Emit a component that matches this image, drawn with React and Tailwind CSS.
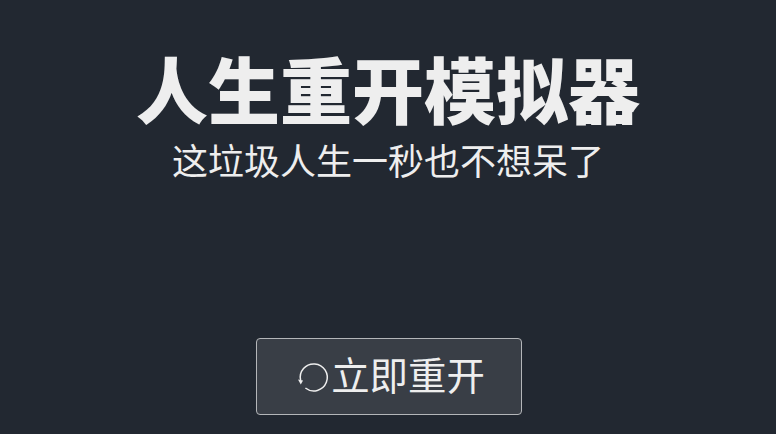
import React from "react";

const RestartIcon = () => (
  <svg viewBox="0 0 34 34" className="h-[34px] w-[34px] shrink-0" fill="none">
    <path
      d="M3.6 20.4A13.5 13.5 0 1 1 8.4 28"
      stroke="#eeeeee"
      strokeWidth="1.5"
    />
    <path d="M1 19.6L6 20.4L3.8 24.4Z" fill="#eeeeee" />
  </svg>
);

export default function App() {
  return (
    <div
      className="flex h-[434px] w-full flex-col items-center overflow-hidden bg-[#222831] text-[#eeeeee]"
      style={{ fontFamily: '"Liberation Sans", "Noto Sans CJK SC", sans-serif' }}
    >
      <h1 className="mt-[50px] text-[72px] leading-[86px] font-black">人生重开模拟器</h1>
      <div className="mt-[5px] text-[36px] leading-[43px]">这垃圾人生一秒也不想呆了</div>
      <button className="mt-[154px] ml-[2px] flex h-[77px] w-[266px] items-center justify-center rounded border border-[#b4b6b9] bg-[#393e46] pt-[1px] pl-[4px] text-[38.4px]">
        <RestartIcon />
        <span>立即重开</span>
      </button>
    </div>
  );
}
